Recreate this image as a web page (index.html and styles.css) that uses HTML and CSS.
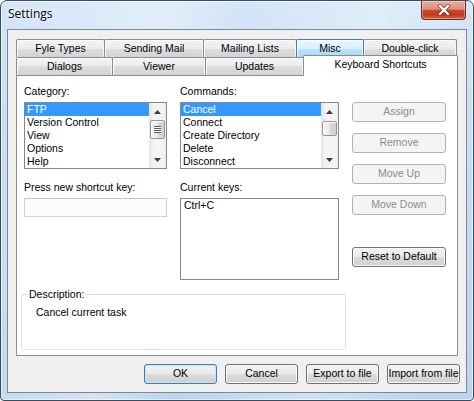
FILE: index.html
```html
<!DOCTYPE html>
<html>
<head>
<meta charset="utf-8">
<title>Settings</title>
<link rel="stylesheet" href="styles.css">
</head>
<body>
<div class="window">
  <div class="titlebar">
    <span class="title">Settings</span>
    <div class="close">
      <svg width="14" height="12" viewBox="0 0 14 12">
        <path d="M3 2 L11 10 M11 2 L3 10" stroke="#5a1e14" stroke-width="4" stroke-linecap="square" opacity="0.55"/>
        <path d="M3 2 L11 10 M11 2 L3 10" stroke="#ffffff" stroke-width="2.2" stroke-linecap="square"/>
      </svg>
    </div>
  </div>
  <div class="client">
    <div class="tabctl">
      <div class="tabrow">
        <div class="tab w-fyle">Fyle Types</div>
        <div class="tab w-send">Sending Mail</div>
        <div class="tab w-mail">Mailing Lists</div>
        <div class="tab tab-hot w-misc">Misc</div>
        <div class="tab w-dbl">Double-click</div>
      </div>
      <div class="tabrow">
        <div class="tab w-dlg">Dialogs</div>
        <div class="tab w-view">Viewer</div>
        <div class="tab w-upd">Updates</div>
        <div class="tab tab-sel w-keys">Keyboard Shortcuts</div>
      </div>
      <div class="panel">
        <div class="top-area">
          <div class="col col1">
            <div class="lbl">Category:</div>
            <div class="listbox">
              <ul class="items">
                <li class="sel">FTP</li>
                <li>Version Control</li>
                <li>View</li>
                <li>Options</li>
                <li>Help</li>
              </ul>
              <div class="vscroll">
                <div class="sbtn"><svg width="7" height="4" viewBox="0 0 7 4"><path d="M0 4 H7 L3.5 0 Z" fill="#3a3a3a"/></svg></div>
                <div class="track"><div class="thumb"><div class="grip"></div></div></div>
                <div class="sbtn"><svg width="7" height="4" viewBox="0 0 7 4"><path d="M0 0 H7 L3.5 4 Z" fill="#3a3a3a"/></svg></div>
              </div>
            </div>
            <div class="lbl lbl2">Press new shortcut key:</div>
            <div class="textbox"></div>
          </div>
          <div class="col col2">
            <div class="lbl">Commands:</div>
            <div class="listbox">
              <ul class="items">
                <li class="sel">Cancel</li>
                <li>Connect</li>
                <li>Create Directory</li>
                <li>Delete</li>
                <li>Disconnect</li>
              </ul>
              <div class="vscroll">
                <div class="sbtn"><svg width="7" height="4" viewBox="0 0 7 4"><path d="M0 4 H7 L3.5 0 Z" fill="#3a3a3a"/></svg></div>
                <div class="track"><div class="thumb thumb-small"></div></div>
                <div class="sbtn"><svg width="7" height="4" viewBox="0 0 7 4"><path d="M0 0 H7 L3.5 4 Z" fill="#3a3a3a"/></svg></div>
              </div>
            </div>
            <div class="lbl lbl2">Current keys:</div>
            <div class="keysbox">Ctrl+C</div>
          </div>
          <div class="col col3">
            <div class="btn btn-disabled">Assign</div>
            <div class="btn btn-disabled">Remove</div>
            <div class="btn btn-disabled">Move Up</div>
            <div class="btn btn-disabled">Move Down</div>
            <div class="btn btn-reset">Reset to Default</div>
          </div>
        </div>
        <fieldset class="desc">
          <legend>Description:</legend>
          <div class="desc-text">Cancel current task</div>
        </fieldset>
      </div>
    </div>
    <div class="actions">
      <div class="btn btn-default">OK</div>
      <div class="btn">Cancel</div>
      <div class="btn">Export to file</div>
      <div class="btn">Import from file</div>
    </div>
  </div>
</div>
</body>
</html>
```

FILE: styles.css
```css
html, body {
  margin: 0;
  padding: 0;
  background: #ffffff;
}

body {
  width: 474px;
  height: 401px;
  overflow: hidden;
  font-family: "Liberation Sans", Arial, sans-serif;
  font-size: 10.5px;
  color: #000;
}

.window {
  width: 474px;
  height: 401px;
  box-sizing: border-box;
  border: 1px solid #414b57;
  border-radius: 7px 7px 4px 4px;
  background:
    linear-gradient(100deg, rgba(255,255,255,0) 0%, rgba(255,255,255,0.35) 30%, rgba(255,255,255,0) 45%, rgba(255,255,255,0.3) 70%, rgba(255,255,255,0) 90%),
    linear-gradient(180deg, #d3e5f8 0%, #c5dcf4 40%, #bcd4ee 100%);
  box-shadow: inset 0 0 0 1px rgba(255,255,255,0.55);
  display: flex;
  flex-direction: column;
  padding: 0 6px 7px 6px;
}

.titlebar {
  height: 28px;
  display: flex;
  align-items: flex-start;
  justify-content: space-between;
}

.title {
  font-family: "Open Sans", "Noto Sans", sans-serif;
  font-size: 12px;
  line-height: 16px;
  margin-top: 5px;
  margin-left: 1px;
  text-shadow: 0 0 6px rgba(255,255,255,0.95), 0 0 3px rgba(255,255,255,0.9);
}

.close {
  width: 45px;
  height: 19px;
  box-sizing: border-box;
  margin-right: 1px;
  border: 1px solid #6b2a1e;
  border-top: none;
  border-radius: 0 0 4px 4px;
  background: linear-gradient(180deg, #eab0a3 0%, #de8f7d 45%, #c9492e 52%, #c0391e 75%, #d6633f 100%);
  box-shadow: inset 0 0 0 1px rgba(255,255,255,0.35);
  display: flex;
  align-items: center;
  justify-content: center;
}

.client {
  flex: 1;
  border: 1px solid #7d8896;
  background: #f0f0f0;
  padding: 9px 6px 7px 8px;
  display: flex;
  flex-direction: column;
}

.tabctl {
  margin-right: 2px;
  display: flex;
  flex-direction: column;
}

.tabrow {
  display: flex;
  height: 18px;
  align-items: flex-start;
}

.tab {
  height: 18px;
  box-sizing: border-box;
  border: 1px solid #898c95;
  border-bottom: none;
  border-radius: 2px 2px 0 0;
  background: linear-gradient(180deg, #f3f3f3 0%, #ececec 50%, #dedede 50%, #d3d3d3 100%);
  box-shadow: inset 1px 1px 0 #fbfbfb, inset -1px 0 0 #f6f6f6;
  text-align: center;
  line-height: 13px;
  padding-top: 2px;
  white-space: nowrap;
  margin-left: -1px;
  position: relative;
}

.tabrow .tab:first-child {
  margin-left: 0;
}

.tab-hot {
  border-color: #3c7fb1;
  background: linear-gradient(180deg, #eaf6fd 0%, #d9f0fc 50%, #bee6fd 50%, #a7d9f5 100%);
  z-index: 1;
}

.tab-sel {
  height: 21px;
  margin-top: -2px;
  padding-top: 2px;
  background: #ffffff;
  box-shadow: none;
  z-index: 2;
}

.w-fyle { width: 89px; }
.w-send { width: 100px; }
.w-mail { width: 94px; }
.w-misc { width: 68px; }
.w-dbl  { width: 94px; }
.w-dlg  { width: 97px; }
.w-view { width: 94px; }
.w-upd  { width: 99px; }
.w-keys { width: 155px; }

.panel {
  height: 281px;
  box-sizing: border-box;
  border: 1px solid #898c95;
  background: #ffffff;
  padding: 9px 0 0 7px;
  display: flex;
  flex-direction: column;
}

.top-area {
  display: flex;
  gap: 13px;
}

.col {
  display: flex;
  flex-direction: column;
}

.col1 { width: 143px; }
.col2 { width: 159px; }
.col3 { width: 94px; padding-top: 17px; }

.lbl {
  line-height: 13px;
  height: 13px;
  margin-bottom: 4px;
  white-space: nowrap;
}

.lbl2 {
  margin-top: 12px;
}

.listbox {
  height: 67px;
  box-sizing: border-box;
  border: 1px solid #828790;
  background: #fff;
  display: flex;
}

.items {
  list-style: none;
  margin: 0;
  padding: 0;
  flex: 1;
  min-width: 0;
}

.items li {
  height: 13px;
  line-height: 13px;
  padding-left: 2px;
  white-space: nowrap;
}

.items li.sel {
  background: #3399ff;
  color: #ffffff;
}

.vscroll {
  width: 17px;
  display: flex;
  flex-direction: column;
  background: linear-gradient(90deg, #e4e4e4 0%, #f3f3f3 25%, #f5f5f5 75%, #ededed 100%);
}

.sbtn {
  height: 17px;
  display: flex;
  align-items: center;
  justify-content: center;
}

.sbtn svg {
  display: block;
}

.track {
  flex: 1;
  padding: 0 1px;
}

.thumb {
  height: 19px;
  box-sizing: border-box;
  border: 1px solid #979797;
  border-radius: 2px;
  background: linear-gradient(90deg, #f4f4f4 0%, #ebebeb 45%, #dbdbdb 55%, #cfcfcf 100%);
  box-shadow: inset 1px 1px 0 #ffffff;
  display: flex;
  align-items: center;
  justify-content: center;
}

.thumb-small {
  height: 15px;
  margin-top: 1px;
}

.grip {
  width: 7px;
  height: 7px;
  background: repeating-linear-gradient(180deg, #5f5f5f 0 1px, rgba(255,255,255,0.8) 1px 2px);
}

.textbox {
  height: 19px;
  box-sizing: border-box;
  border: 1px solid #cdd1d5;
  border-top-color: #c2c6cb;
  background: #fbfbfb;
}

.keysbox {
  height: 82px;
  box-sizing: border-box;
  border: 1px solid #828790;
  background: #fff;
  line-height: 13px;
  padding: 0 3px;
}

.btn {
  height: 20px;
  box-sizing: border-box;
  border: 1px solid #707070;
  border-radius: 3px;
  background: linear-gradient(180deg, #f2f2f2 0%, #ebebeb 50%, #dddddd 50%, #cfcfcf 100%);
  box-shadow: inset 0 0 0 1px #fbfbfb;
  text-align: center;
  line-height: 17px;
  white-space: nowrap;
}

.col3 .btn + .btn {
  margin-top: 11px;
}

.col3 .btn-reset {
  margin-top: 32px !important;
}

.btn-disabled {
  border-color: #adb2b5;
  background: #f4f4f4;
  box-shadow: none;
  color: #8c8c8c;
}

.btn-default {
  border-color: #3c7fb1;
  box-shadow: inset 0 0 0 1px #c7e5f7;
}

.desc {
  margin: 8px 0 0 -3px;
  width: 325px;
  box-sizing: border-box;
  border: 1px solid #d5dfe5;
  border-radius: 3px;
  padding: 5px 0 30px 6px;
  min-width: 0;
}

.desc legend {
  padding: 0 1px;
  line-height: 13px;
}

.desc-text {
  line-height: 13px;
  padding-left: 8px;
}

.actions {
  margin-top: 8px;
  display: flex;
  justify-content: flex-end;
  gap: 8px;
}

.actions .btn {
  width: 73px;
}
```
